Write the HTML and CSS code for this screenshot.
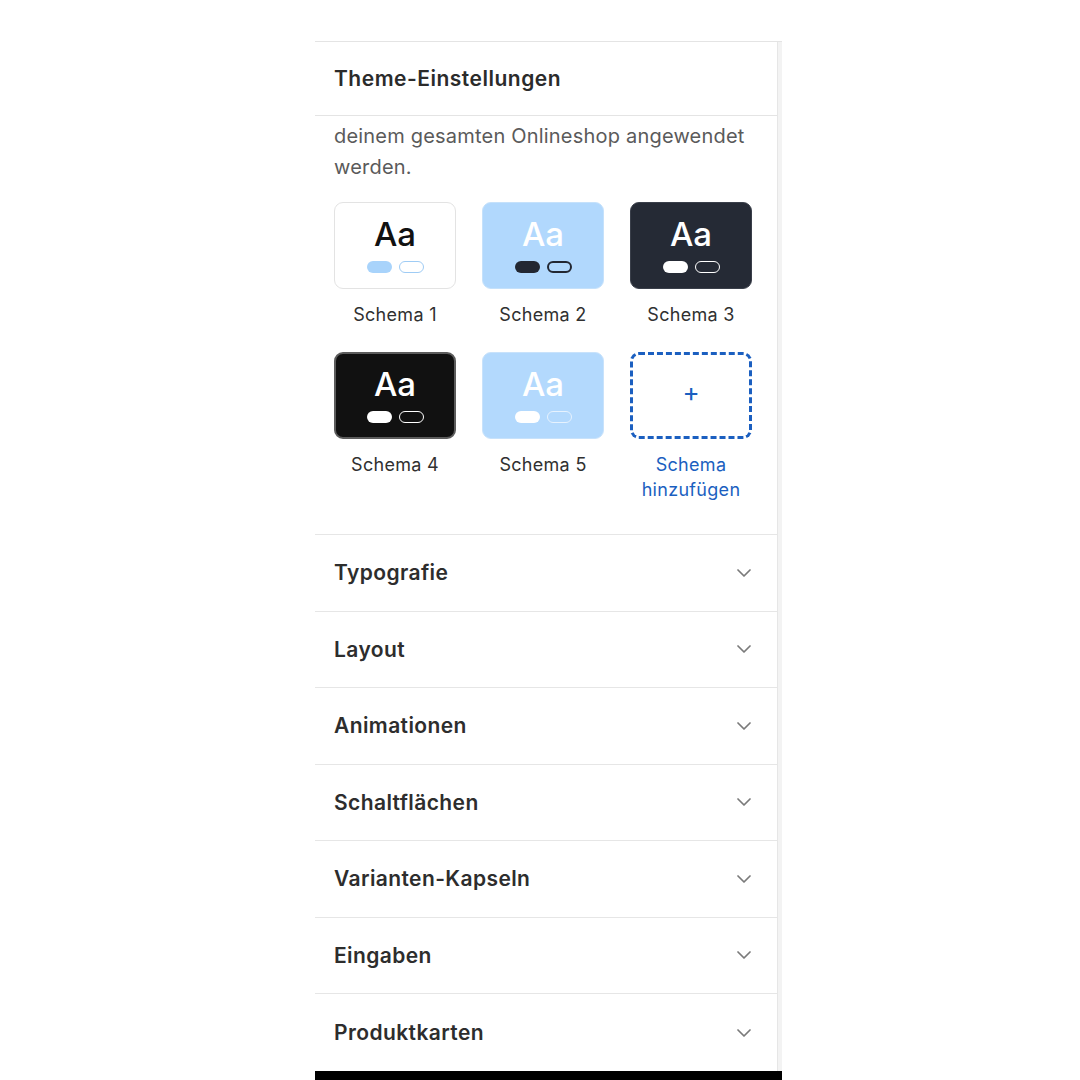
FILE: index.html
```html
<!DOCTYPE html>
<html lang="de">
<head>
<meta charset="utf-8">
<title>Theme-Einstellungen</title>
<link rel="stylesheet" href="styles.css">
</head>
<body>
<div class="panel">
  <div class="main">
    <div class="header">Theme-Einstellungen</div>
    <div class="body">
      <p class="desc">deinem gesamten Onlineshop angewendet werden.</p>
      <div class="schemes">
        <div class="scheme">
          <div class="card c1"><span class="aa">Aa</span><span class="pills"><span class="pill fill"></span><span class="pill line"></span></span></div>
          <div class="label">Schema 1</div>
        </div>
        <div class="scheme">
          <div class="card c2"><span class="aa">Aa</span><span class="pills"><span class="pill fill"></span><span class="pill line"></span></span></div>
          <div class="label">Schema 2</div>
        </div>
        <div class="scheme">
          <div class="card c3"><span class="aa">Aa</span><span class="pills"><span class="pill fill"></span><span class="pill line"></span></span></div>
          <div class="label">Schema 3</div>
        </div>
        <div class="scheme">
          <div class="card c4"><span class="aa">Aa</span><span class="pills"><span class="pill fill"></span><span class="pill line"></span></span></div>
          <div class="label">Schema 4</div>
        </div>
        <div class="scheme">
          <div class="card c5"><span class="aa">Aa</span><span class="pills"><span class="pill fill"></span><span class="pill line"></span></span></div>
          <div class="label">Schema 5</div>
        </div>
        <div class="scheme">
          <div class="card add"><span class="plus">+</span></div>
          <div class="label add-label">Schema hinzufügen</div>
        </div>
      </div>
    </div>
    <div class="rows">
      <div class="row"><span>Typografie</span><svg class="chev" viewBox="0 0 14 8"><path d="M1 1l6 6 6-6"/></svg></div>
      <div class="row"><span>Layout</span><svg class="chev" viewBox="0 0 14 8"><path d="M1 1l6 6 6-6"/></svg></div>
      <div class="row"><span>Animationen</span><svg class="chev" viewBox="0 0 14 8"><path d="M1 1l6 6 6-6"/></svg></div>
      <div class="row"><span>Schaltflächen</span><svg class="chev" viewBox="0 0 14 8"><path d="M1 1l6 6 6-6"/></svg></div>
      <div class="row"><span>Varianten-Kapseln</span><svg class="chev" viewBox="0 0 14 8"><path d="M1 1l6 6 6-6"/></svg></div>
      <div class="row"><span>Eingaben</span><svg class="chev" viewBox="0 0 14 8"><path d="M1 1l6 6 6-6"/></svg></div>
      <div class="row last"><span>Produktkarten</span><svg class="chev" viewBox="0 0 14 8"><path d="M1 1l6 6 6-6"/></svg></div>
    </div>
  </div>
  <div class="track"></div>
</div>
<div class="bottombar"></div>
</body>
</html>
```
FILE: styles.css
```css
html, body {
  margin: 0;
  padding: 0;
  background: #fff;
  font-family: Inter, "Noto Sans", sans-serif;
  color: #303030;
  overflow: hidden;
  height: 1080px;
}
.panel {
  margin: 41px 0 0 315px;
  width: 467px;
  height: 1030px;
  display: flex;
  border-top: 1px solid #e4e4e4;
  box-sizing: border-box;
}
.main {
  flex: 1;
  border-right: 1px solid #e6e6e6;
  display: flex;
  flex-direction: column;
}
.track {
  width: 4px;
  background: #f3f3f3;
}
.header {
  height: 74px;
  box-sizing: border-box;
  padding-left: 19px;
  display: flex;
  align-items: center;
  font-size: 21px;
  font-weight: 600;
  color: #2b2b2b;
  border-bottom: 1px solid #e4e4e4;
  letter-spacing: 0.5px;
}
.body {
  padding: 5px 22px 0 19px;
  height: 418px;
  box-sizing: border-box;
}
.desc {
  margin: 0;
  font-size: 20px;
  line-height: 31px;
  color: #5a5a5a;
  letter-spacing: 0.2px;
}
.schemes {
  margin-top: 19px;
  display: grid;
  grid-template-columns: repeat(3, 122px);
  column-gap: 26px;
  row-gap: 0;
}
.scheme {
  display: flex;
  flex-direction: column;
  align-items: stretch;
  height: 150px;
}
.card {
  height: 87px;
  box-sizing: border-box;
  border-radius: 9px;
  display: flex;
  flex-direction: column;
  align-items: center;
  justify-content: center;
  gap: 9px;
  padding-bottom: 2px;
}
.aa {
  font-size: 33px;
  line-height: 36px;
  font-weight: 500;
}
.pills {
  display: flex;
  gap: 7px;
}
.pill {
  width: 25px;
  height: 12px;
  border-radius: 7px;
  box-sizing: border-box;
}
.c1 { background: #fff; border: 1px solid #e3e3e3; }
.c1 .aa { color: #111; }
.c1 .fill { background: #a8d3fb; }
.c1 .line { border: 1.5px solid #9fccf5; background: #fff; }
.c2 { background: #b1d8fd; border: 1px solid #c5e1fb; }
.c2 .aa { color: #fff; }
.c2 .fill { background: #222732; }
.c2 .line { border: 2px solid #222732; background: #b1d8fd; }
.c3 { background: #252a35; border: 1px solid #3a3f4a; }
.c3 .aa { color: #fff; }
.c3 .fill { background: #fff; }
.c3 .line { border: 1.5px solid #fff; }
.c4 { background: #111; border: 2px solid #5c5c5c; }
.c4 .aa { color: #fff; }
.c4 .fill { background: #fff; }
.c4 .line { border: 1.5px solid #fff; }
.c5 { background: #b3d9fd; border: 1px solid #c8e2fb; }
.c5 .aa { color: #fff; }
.c5 .fill { background: #fff; }
.c5 .line { border: 1px solid #e6f2fe; }
.add {
  border: 3px dashed #1b5fc0;
  background: #fff;
  padding-bottom: 7px;
}
.plus {
  color: #1b5fc0;
  font-size: 26px;
  line-height: 26px;
  font-weight: 400;
}
.label {
  margin-top: 13px;
  text-align: center;
  font-size: 18px;
  line-height: 25px;
  color: #303030;
  letter-spacing: 0.3px;
}
.add-label {
  color: #1b5fc0;
  padding: 0 10px;
}
.rows {
  display: flex;
  flex-direction: column;
}
.row {
  height: 76.5px;
  box-sizing: border-box;
  border-top: 1px solid #e6e6e6;
  display: flex;
  align-items: center;
  justify-content: space-between;
  padding: 0 26px 0 19px;
  font-size: 21px;
  font-weight: 600;
  color: #2d2d2d;
  letter-spacing: 0.4px;
}
.row.last { height: 78px; }
.chev {
  width: 14px;
  height: 8px;
  fill: none;
  stroke: #7a7a7a;
  stroke-width: 1.7;
  stroke-linecap: round;
  stroke-linejoin: round;
}
.bottombar {
  position: absolute;
  left: 315px;
  top: 1071px;
  width: 467px;
  height: 20px;
  background: #000;
}
```
